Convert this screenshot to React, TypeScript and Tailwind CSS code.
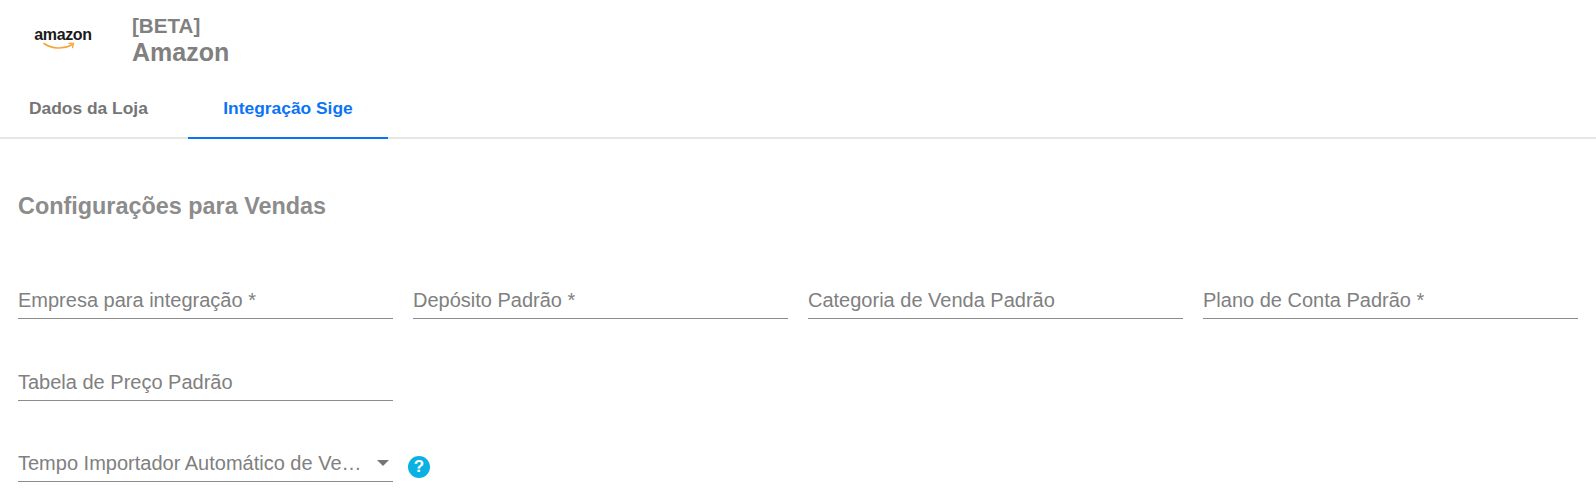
const fields = ["Empresa para integração *", "Depósito Padrão *", "Categoria de Venda Padrão", "Plano de Conta Padrão *"];

function Field({ label }: { label: string }) {
  return (
    <div className="flex h-[34px] w-[375px] items-center border-b border-[#8c8c8c] pb-[4px] text-[20px] text-[#808080]">
      <span className="truncate">{label}</span>
    </div>
  );
}

function AmazonLogo() {
  return (
    <div className="relative flex h-[30px] w-[60px] flex-col items-center">
      <span className="text-[16px] leading-[20px] font-bold tracking-[-0.35px] text-[#1a1a1a]">amazon</span>
      <svg className="absolute top-[15px] left-[10px]" width="36" height="12" viewBox="0 0 36 12" fill="none">
        <path d="M1 3.5C9 9 20 9.5 29 5" stroke="#f4a63a" strokeWidth="1.6" strokeLinecap="round" />
        <path d="M26 3.5L30.5 3.5L29.5 7.5" stroke="#f4a63a" strokeWidth="1.3" strokeLinecap="round" />
      </svg>
    </div>
  );
}

export default function App() {
  return (
    <div className="h-[496px] w-[1596px] overflow-hidden bg-white font-['Liberation_Sans',Arial,sans-serif]">
      <header className="flex h-[84px] items-start pl-[33px]">
        <div className="mt-[25px]">
          <AmazonLogo />
        </div>
        <div className="mt-[15px] ml-[39px] flex flex-col font-bold text-[#808080]">
          <span className="text-[20.6px] leading-[22px]">[BETA]</span>
          <span className="text-[25px] leading-[31px]">Amazon</span>
        </div>
      </header>

      <nav className="flex h-[55px] border-b-2 border-[#e6e6e6]">
        <div className="flex w-[188px] items-center pb-[4px] pl-[29px] text-[17.4px] font-bold text-[#757575]">Dados da Loja</div>
        <div className="-mb-[2px] flex w-[200px] items-center justify-center border-b-2 border-[#0a74f5] pb-[4px] text-[17.4px] font-bold text-[#0a74f5]">
          Integração Sige
        </div>
      </nav>

      <main className="px-[18px]">
        <h2 className="mt-[53px] text-[23.4px] leading-[28px] font-bold text-[#8c8c8c]">Configurações para Vendas</h2>

        <div className="mt-[65px] flex gap-[20px]">
          {fields.map((label) => (
            <Field key={label} label={label} />
          ))}
        </div>

        <div className="mt-[48px]">
          <Field label="Tabela de Preço Padrão" />
        </div>

        <div className="mt-[47px] flex items-center">
          <div className="flex h-[34px] w-[375px] items-center justify-between border-b border-[#8c8c8c] pr-[4px] pb-[4px] text-[20px] text-[#808080]">
            <span>Tempo Importador Automático de Ve…</span>
            <span className="h-0 w-0 border-x-[6px] border-t-[6px] border-x-transparent border-t-[#757575]" />
          </div>
          <div className="mt-[4px] ml-[15px] flex h-[22px] w-[22px] items-center justify-center rounded-full bg-[#0cb1e3] text-[17px] font-bold text-white">?</div>
        </div>
      </main>
    </div>
  );
}
